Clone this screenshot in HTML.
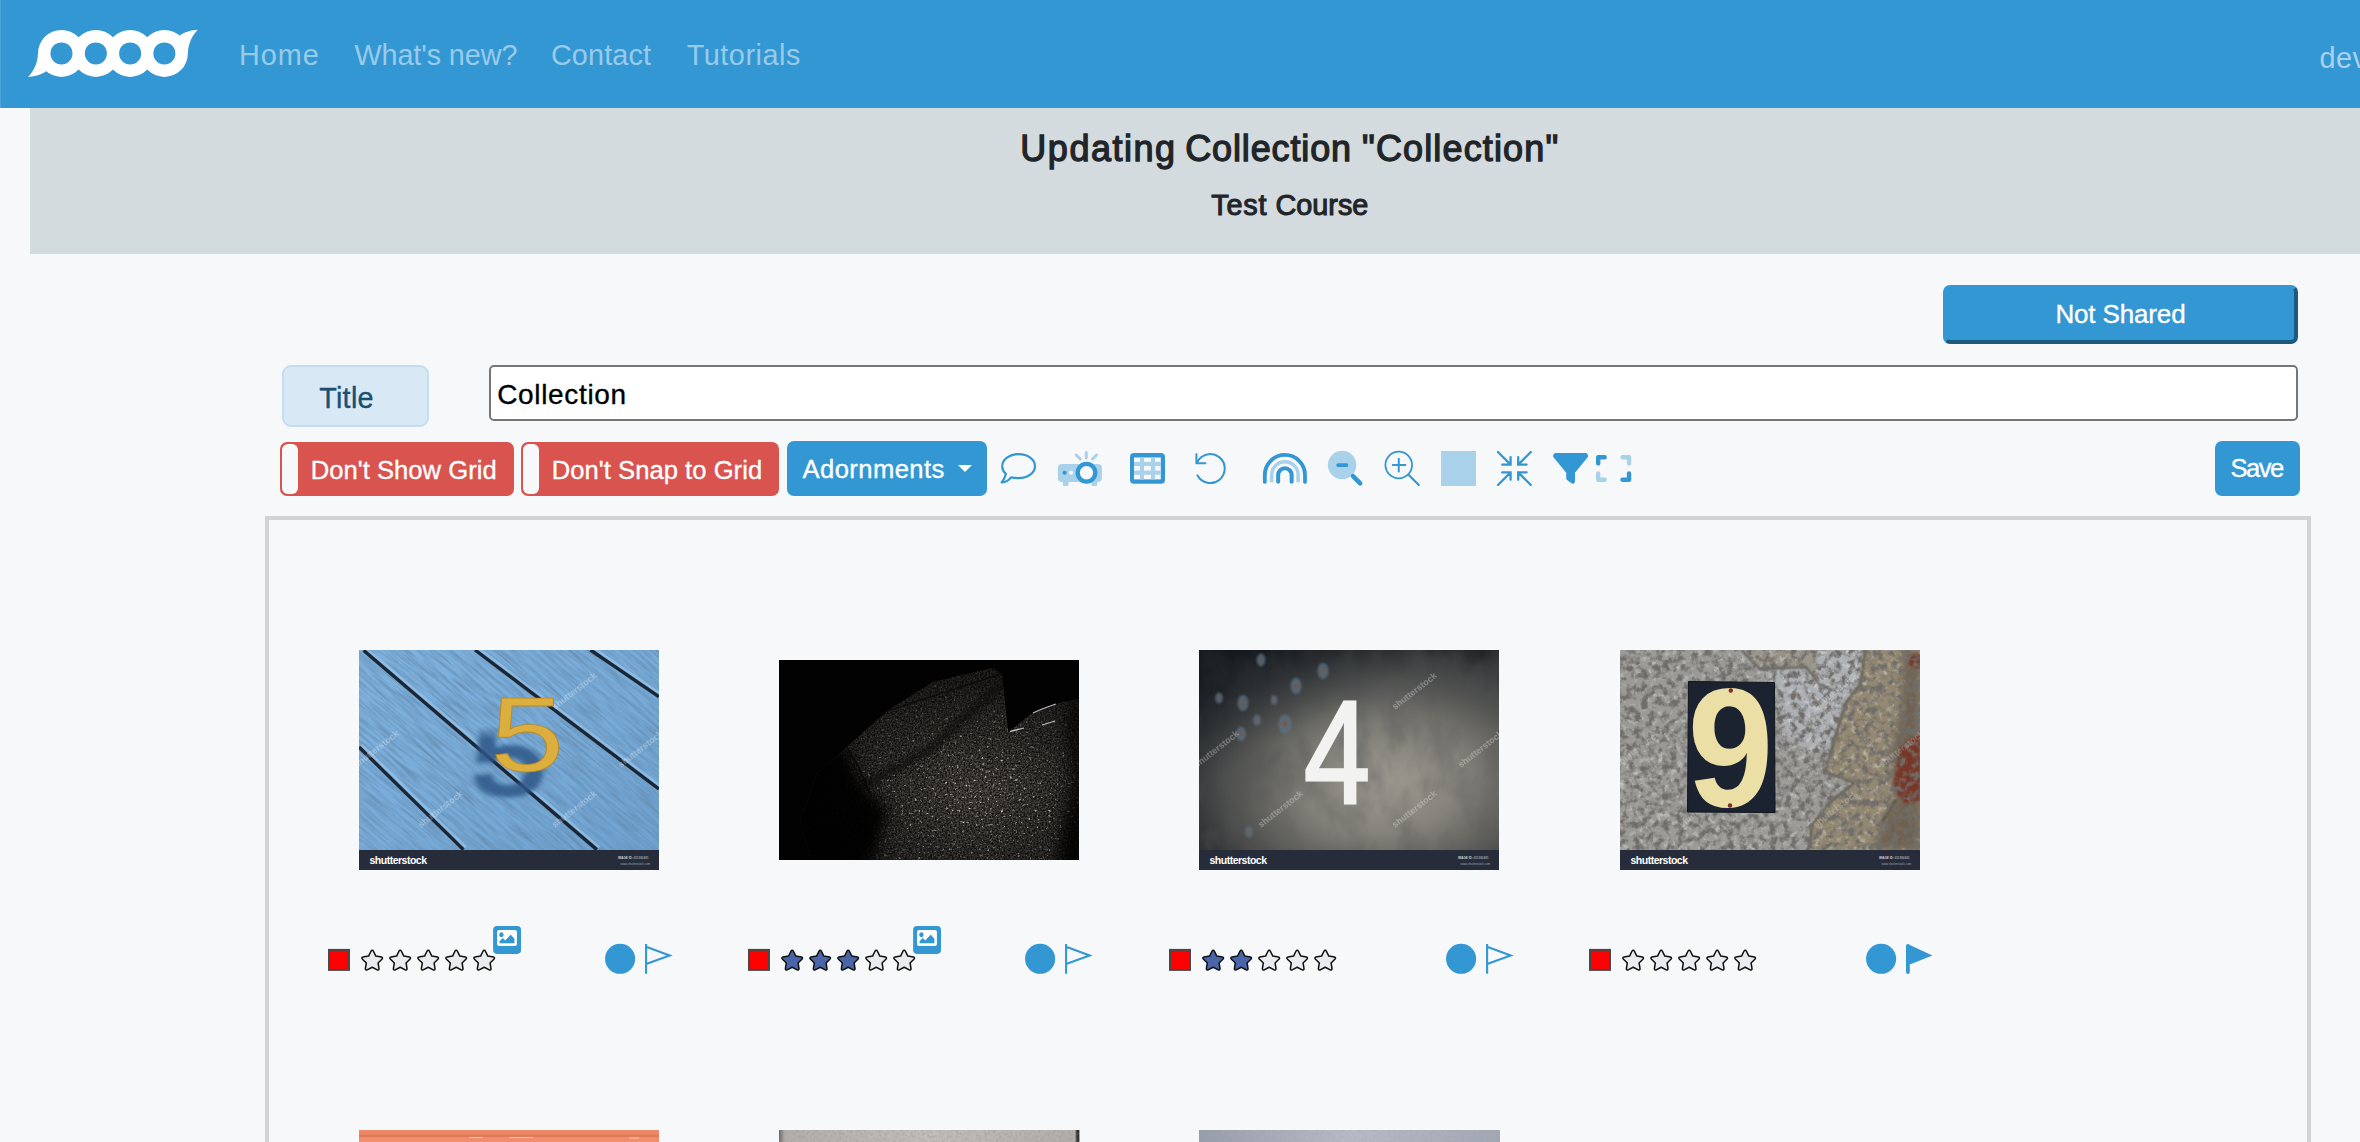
<!DOCTYPE html>
<html lang="en">
<head>
<meta charset="utf-8">
<title>Updating Collection "Collection"</title>
<style>
*{box-sizing:border-box;margin:0;padding:0}
html,body{width:2360px;height:1142px;overflow:hidden;background:#f7f8fa;font-family:"Liberation Sans",sans-serif;color:#212529}
.abs{position:absolute}
#nav{left:0;top:0;width:2360px;height:108px;background:#3397d3}
.navl{top:35px;height:40px;line-height:40px;font-size:28.8px;color:#99cbe9;white-space:nowrap}
#banner{left:30px;top:108px;width:2330px;height:146px;background:#d4dbde}
#h1{left:0;top:121.5px;width:2360px;font-size:36px;font-weight:normal;-webkit-text-stroke:1.3px #212529;paint-order:stroke fill;line-height:54px;color:#212529;white-space:nowrap}
#h2{left:0;top:184.3px;width:2360px;font-size:28.8px;font-weight:normal;-webkit-text-stroke:1.05px #212529;paint-order:stroke fill;line-height:42px;color:#212529;white-space:nowrap}
.t{white-space:nowrap;line-height:30px;height:30px;-webkit-text-stroke:.35px currentColor}
#notshared{left:1943px;top:285px;width:355px;height:59px;background:#3397d3;border:4px solid;border-color:#3397d3 #1d5a80 #1d5a80 #3397d3;border-radius:7px}
#titlelab{left:282px;top:365px;width:147px;height:62px;background:#d8e9f5;border:2px solid #c4def0;border-radius:9px}
#titlein{left:489px;top:365px;width:1809px;height:56px;background:#fff;border:2px solid #767676;border-radius:5px}
.red{background:#d9534f;border-radius:7px;top:442px;height:54px}
.red i{position:absolute;left:2px;top:2px;width:16px;height:50px;background:#f7f8fa;border-radius:6px}
#adorn{left:787px;top:441px;width:200px;height:55px;background:#3397d3;border-radius:7px}
#adorn b{position:absolute;left:170.5px;top:23.5px;width:0;height:0;border-left:7px solid transparent;border-right:7px solid transparent;border-top:7px solid #fff}
#save{left:2215px;top:441px;width:85px;height:55px;background:#3397d3;border-radius:7px}
#canvas{left:265px;top:516px;width:2046px;height:700px;border:4px solid #d3d3d3;border-bottom:none}
svg{position:absolute;overflow:visible}
#h1 span,#h2 span{position:absolute;top:0}
</style>
</head>
<body>
<div id="nav" class="abs"></div>
<svg class="abs" style="left:0;top:0" width="220" height="108" viewBox="0 0 220 108"><g fill="#fff"><circle cx="61.47" cy="53.4" r="23.5"/><circle cx="95.84" cy="53.4" r="23.5"/><circle cx="130.14" cy="53.4" r="23.5"/><circle cx="164.36" cy="53.4" r="23.5"/><path d="M37.9 53.4C37.9 62 34 71 28.05 77C33 76.8 40.5 75.5 46.6 71.1Z"/><path d="M187.93 53.4C187.93 44.8 191.83 35.8 197.78 29.8C192.83 30.0 185.33 31.3 179.23 35.7Z"/></g><g fill="#3397d3"><circle cx="61.47" cy="53.4" r="11"/><circle cx="95.84" cy="53.4" r="11"/><circle cx="130.14" cy="53.4" r="11"/><circle cx="164.36" cy="53.4" r="11"/></g></svg>
<div id="n0" class="abs navl" style="left:239.00px;letter-spacing:1.02px;">Home</div>
<div id="n1" class="abs navl" style="left:354.40px;letter-spacing:-0.09px;">What's new?</div>
<div id="n2" class="abs navl" style="left:550.90px;letter-spacing:0.14px;">Contact</div>
<div id="n3" class="abs navl" style="left:686.65px;letter-spacing:0.56px;">Tutorials</div>
<div id="n4" class="abs navl" style="left:2319.600px;top:38.300px;letter-spacing:.5px;color:#a9d2ee">dev</div>
<div id="banner" class="abs"></div>
<div id="h1" class="abs"><span id="w1" style="left:1020.32px;letter-spacing:1.53px">Updating</span> <span id="w2" style="left:1185.13px;letter-spacing:0.88px">Collection</span> <span id="w3" style="left:1362.00px;letter-spacing:1.14px">"Collection"</span></div>
<div id="h2" class="abs"><span id="w4" style="left:1211.35px;letter-spacing:0.79px">Test</span> <span id="w5" style="left:1275.53px;letter-spacing:0.00px">Course</span></div>
<div id="notshared" class="abs"></div>
<div id="titlelab" class="abs"></div>
<div id="titlein" class="abs"></div>
<div class="abs red" style="left:280px;width:234px"><i></i></div>
<div class="abs red" style="left:521px;width:258px"><i></i></div>
<div id="adorn" class="abs"><b></b></div>
<div id="save" class="abs"></div>
<span id="t_ns" class="abs t" style="left:2055.44px;letter-spacing:-0.15px;top:299.40px;font-size:26px;color:#fff">Not Shared</span>
<span id="t_title" class="abs t" style="left:319.14px;letter-spacing:0.28px;top:382.50px;font-size:28.800px;color:#1b4f72">Title</span>
<span id="t_coll" class="abs t" style="left:497.19px;letter-spacing:0.67px;top:379.60px;font-size:28px;color:#000">Collection</span>
<span id="t_dsg" class="abs t" style="left:310.72px;letter-spacing:0.03px;top:454.80px;font-size:25.600px;color:#fff">Don't Show Grid</span>
<span id="t_dstg" class="abs t" style="left:551.72px;letter-spacing:0.04px;top:454.80px;font-size:25.600px;color:#fff">Don't Snap to Grid</span>
<span id="t_ad" class="abs t" style="left:802.60px;letter-spacing:0.41px;top:453.70px;font-size:25.600px;color:#fff">Adornments</span>
<span id="t_save" class="abs t" style="left:2230.60px;letter-spacing:-1.60px;top:452.800px;font-size:25.600px;color:#fff">Save</span>
<div id="canvas" class="abs"></div>
<div class="abs" style="left:0;top:0;width:1px;height:1142px;background:rgba(255,255,255,.14)"></div>
<svg class="abs" style="left:990px;top:440px" width="660" height="60" viewBox="990 440 660 60"><path d="M1018.6 454.200C1009.500 454.200 1002.200 459.600 1002.200 466.200C1002.200 469.100 1003.600 471.800 1005.900 473.900C1005.300 476.700 1003.700 479.700 1001.700 482.400C1005.200 482.500 1008.600 480.600 1011 477.400C1013.400 478 1016 478.200 1018.600 478.200C1027.700 478.200 1035 472.800 1035 466.200S1027.700 454.200 1018.600 454.200Z" fill="none" stroke="#3397d3" stroke-width="2.200" stroke-linejoin="round"/><g fill="#a9d1ea"><rect x="1057.9" y="464" width="44" height="18" rx="4"/><rect x="1062.9" y="480" width="5.600" height="6" rx="1.5"/><rect x="1091.5" y="480" width="5.700" height="6" rx="1.5"/></g><g stroke="#a9d1ea" stroke-width="3" stroke-linecap="round"><path d="M1086.3 452.500V458M1076.2 455l4 4M1096.500 455l-4 4"/></g><circle cx="1086.5" cy="472.75" r="8.8" fill="#f7f8fa" stroke="#3397d3" stroke-width="4.2"/><circle cx="1064.6" cy="472.75" r="2.1" fill="#3397d3"/><circle cx="1071" cy="472.75" r="2.1" fill="#f7f8fa"/><rect x="1130" y="453.1" width="35" height="30.65" rx="4" fill="#3397d3"/><rect x="1134" y="457.5" width="26.800" height="21.900" fill="#f7f8fa"/><g fill="#a9d1ea"><rect x="1140" y="457.5" width="4" height="21.900"/><rect x="1151" y="457.5" width="4" height="21.900"/><rect x="1134" y="461.9" width="26.800" height="4.100"/><rect x="1134" y="470.6" width="26.800" height="4.150"/></g><g fill="none" stroke="#3397d3" stroke-width="2" stroke-linecap="round" stroke-linejoin="round"><path d="M1197.2 462.2A14.500 14.500 0 1 1 1197.4 475.3"/><path d="M1196.4 454.2V463.3H1205.4"/></g><g fill="none" stroke-linecap="round"><path d="M1264.8 481.900V475a20.100 20.100 0 0 1 40.200 0V481.900" stroke="#3397d3" stroke-width="3.800"/><path d="M1271.65 482.200V475a13.250 13.250 0 0 1 26.500 0V482.200" stroke="#a9d1ea" stroke-width="3.500" stroke-linecap="butt"/><path d="M1278.15 481.800V475a6.750 6.750 0 0 1 13.500 0V481.800" stroke="#3397d3" stroke-width="4"/></g><circle cx="1342.1" cy="465" r="14.25" fill="#a9d1ea"/><g stroke="#3397d3" stroke-linecap="round"><path d="M1338.1 465H1346.500" stroke-width="3.750"/><path d="M1353 476.100L1360.200 483.300" stroke-width="4.600"/></g><g fill="none" stroke="#3397d3" stroke-linecap="round"><circle cx="1398.75" cy="465" r="13.3" stroke-width="1.800"/><path d="M1392.8 465H1405.400M1398.750 458.800V471.400" stroke-width="2"/><path d="M1408.5 474.700L1418.800 485" stroke-width="2.200"/></g><rect x="1441" y="451" width="35" height="35" fill="#a9d1ea"/><path d="M1498.0 452.0L1510.6 464.6M1510.6 457.2L1510.6 464.6L1502.2 464.6M1498.0 485.0L1510.6 472.4M1510.6 479.8L1510.6 472.4L1502.2 472.4M1530.8 452.0L1518.2 464.6M1518.2 457.2L1518.2 464.6L1526.6 464.6M1530.8 485.0L1518.2 472.4M1518.2 479.8L1518.2 472.4L1526.6 472.4" fill="none" stroke="#3397d3" stroke-width="2.300" stroke-linecap="round" stroke-linejoin="miter"/><path transform="translate(1553.1 450.9) scale(.06836)" fill="#3397d3" d="M3.900 54.900C10.500 40.900 24.500 32 40 32H472c15.500 0 29.500 8.900 36.100 22.900s4.600 30.500-5.200 42.500L320 320.900V448c0 12.100-6.800 23.200-17.700 28.600s-23.800 4.300-33.500-3l-64-48c-8.100-6-12.800-15.500-12.800-25.600V320.900L9 97.300C-.7 85.400-2.800 68.800 3.900 54.900z"/><g fill="none" stroke-width="4.400" stroke-linecap="round" stroke-linejoin="round"><path d="M1598.2 463.400V457.200H1604.700M1629.050 473.450V479.700H1622.500" stroke="#3397d3"/><path d="M1622.5 457.200H1629.050V463.400M1598.200 473.450V479.700H1604.700" stroke="#a9d1ea"/></g></svg>
<!--ITEMS_START--><svg class="abs" style="left:359.200px;top:650px" width="300" height="220" viewBox="0 0 300 220"><defs><linearGradient id="g1" x1="0" y1="0" x2="1" y2="1"><stop offset="0" stop-color="#7fb2dd"/><stop offset=".5" stop-color="#79acd9"/><stop offset="1" stop-color="#6ea2d0"/></linearGradient><filter id="f1" x="0" y="0" width="100%" height="100%"><feTurbulence type="fractalNoise" baseFrequency=".03 .35" numOctaves="3" seed="7"/><feColorMatrix type="matrix" values="0 0 0 0 .12  0 0 0 0 .25  0 0 0 0 .42  2.200 0 0 0 -.8"/></filter><filter id="f1c" x="0" y="0" width="100%" height="100%"><feTurbulence type="fractalNoise" baseFrequency=".018 .55" numOctaves="2" seed="23"/><feColorMatrix type="matrix" values="0 0 0 0 .13  0 0 0 0 .25  0 0 0 0 .4  5 0 0 0 -3.050"/></filter><linearGradient id="gm1" gradientUnits="userSpaceOnUse" x1="0" y1="76" x2="0" y2="90"><stop offset="0" stop-color="#000"/><stop offset="1" stop-color="#fff"/></linearGradient><mask id="cs1" maskUnits="userSpaceOnUse" x="0" y="0" width="300" height="200"><rect width="300" height="200" fill="url(#gm1)"/></mask><filter id="b1"><feGaussianBlur stdDeviation="2.200"/></filter><clipPath id="c1"><rect width="300" height="200"/></clipPath></defs><g clip-path="url(#c1)"><rect width="300" height="200" fill="url(#g1)"/><g transform="rotate(40 150 100)"><rect x="-150" y="-200" width="600" height="600" filter="url(#f1)" opacity=".7"/><rect x="-150" y="-200" width="600" height="600" filter="url(#f1c)" opacity=".8"/></g><path d="M4.6 0.4L237.8 199.6" stroke="#9cc6ea" stroke-width="2.500" transform="translate(2.600 -2.200)" opacity=".7"/><path d="M4.6 0.4L237.8 199.6" stroke="#1a2634" stroke-width="3.400"/><path d="M116 0L299.8 139" stroke="#9cc6ea" stroke-width="2.500" transform="translate(2.600 -2.200)" opacity=".7"/><path d="M116 0L299.8 139" stroke="#1a2634" stroke-width="3.400"/><path d="M231.5 0L299.8 46.6" stroke="#9cc6ea" stroke-width="2.500" transform="translate(2.600 -2.200)" opacity=".7"/><path d="M231.5 0L299.8 46.6" stroke="#1a2634" stroke-width="3.400"/><path d="M0 97L104.4 199.6" stroke="#9cc6ea" stroke-width="2.500" transform="translate(2.600 -2.200)" opacity=".7"/><path d="M0 97L104.4 199.6" stroke="#1a2634" stroke-width="3.400"/><g font-family="Liberation Sans,sans-serif" font-weight="bold" font-size="9" fill="#fff" opacity="0.3"><text transform="translate(-2 118) rotate(-38)">shutterstock</text><text transform="translate(62 178) rotate(-38)">shutterstock</text><text transform="translate(196 60) rotate(-38)">shutterstock</text><text transform="translate(196 178) rotate(-38)">shutterstock</text><text transform="translate(262 118) rotate(-38)">shutterstock</text></g><g font-family="Liberation Sans,sans-serif" font-size="106"><g mask="url(#cs1)"><text transform="translate(113 144) scale(1.250 1)" fill="#2f5988" stroke="#2f5988" stroke-width="5" filter="url(#b1)" opacity=".85">5</text></g><text transform="translate(131.500 121) scale(1.250 1)" fill="#dcae3e" stroke="#b98a26" stroke-width=".8">5</text></g></g><rect x="0" y="200" width="300" height="20" fill="#262c3a"/><text x="10.500" y="214.300" font-family="Liberation Sans,sans-serif" font-weight="bold" font-size="10.500" fill="#fff" letter-spacing="-.5">shutterstock</text><text x="259" y="208.700" font-family="Liberation Sans,sans-serif" font-size="3" fill="#cfd3da"><tspan font-weight="bold">IMAGE ID:</tspan> 451384465</text><text x="261.500" y="214.500" font-family="Liberation Sans,sans-serif" font-size="3" fill="#9aa0ab">www.shutterstock.com</text></svg><svg class="abs" style="left:779.400px;top:660px" width="300" height="200" viewBox="0 0 300 200"><defs><radialGradient id="g2" cx=".66" cy=".66" r=".6"><stop offset="0" stop-color="#57524c"/><stop offset=".45" stop-color="#3d3a36"/><stop offset="1" stop-color="#22201e"/></radialGradient><radialGradient id="m2" cx=".68" cy=".7" r=".55"><stop offset="0" stop-color="#fff"/><stop offset=".55" stop-color="#8a8a8a"/><stop offset="1" stop-color="#2a2a2a"/></radialGradient><mask id="k2"><rect width="300" height="200" fill="url(#m2)"/></mask><filter id="f2" x="0" y="0" width="100%" height="100%"><feTurbulence type="fractalNoise" baseFrequency=".36" numOctaves="2" seed="11"/><feColorMatrix type="matrix" values="0 0 0 0 .95  0 0 0 0 .93  0 0 0 0 .9  4.200 0 0 0 -2.700"/><feGaussianBlur stdDeviation=".35"/></filter><filter id="f2b" x="0" y="0" width="100%" height="100%"><feTurbulence type="fractalNoise" baseFrequency=".6" numOctaves="2" seed="4"/><feColorMatrix type="matrix" values="0 0 0 0 0  0 0 0 0 0  0 0 0 0 0  1.800 0 0 0 -.55"/></filter><clipPath id="c2"><path d="M32 200L21 161L38 114L68 87L108 51L154 22L213 8L223 14L229 72L252 54L280 43L300 39V200Z"/></clipPath><filter id="b2"><feGaussianBlur stdDeviation="7"/></filter><filter id="b2s"><feGaussianBlur stdDeviation="1.500"/></filter></defs><rect width="300" height="200" fill="#020202"/><g clip-path="url(#c2)"><rect width="300" height="200" fill="url(#g2)"/><rect width="300" height="200" filter="url(#f2b)"/><g mask="url(#k2)"><rect width="300" height="200" filter="url(#f2)"/></g><path d="M84 126L150 90L226 22" stroke="#090807" stroke-width="9" fill="none" opacity=".55" filter="url(#b2s)"/><path d="M68 88L80 108L90 132M108 51L160 34L222 14" stroke="#0a0908" stroke-width="1.600" fill="none" opacity=".8"/><path d="M0 210L0 100L66 86L84 126L110 150L92 210Z" fill="#020202" opacity=".93" filter="url(#b2)"/><path d="M300 30L288 58L293 120L276 210H310Z" fill="#020202" opacity=".85" filter="url(#b2)"/></g><path d="M231 71.500C236 70 240 69.500 245 68M254 53C262 49 268 47 277 44M263 65L276 61" stroke="#d8d8d8" stroke-width="1.300" opacity=".85" fill="none"/></svg><svg class="abs" style="left:1199.400px;top:650px" width="300" height="220" viewBox="0 0 300 220"><defs><radialGradient id="g3" cx=".6" cy=".64" r=".78"><stop offset="0" stop-color="#a09d93"/><stop offset=".35" stop-color="#85837b"/><stop offset=".7" stop-color="#4d4e4d"/><stop offset="1" stop-color="#15181b"/></radialGradient><filter id="f3" x="0" y="0" width="100%" height="100%"><feTurbulence type="fractalNoise" baseFrequency=".035 .02" numOctaves="4" seed="5"/><feColorMatrix type="matrix" values="0 0 0 0 .1  0 0 0 0 .1  0 0 0 0 .1  2 0 0 0 -.8"/></filter><clipPath id="c3"><rect width="300" height="200"/></clipPath><linearGradient id="v3" x1="0" y1="0" x2=".6" y2=".75"><stop offset="0" stop-color="#10171d" stop-opacity=".75"/><stop offset=".55" stop-color="#10171d" stop-opacity=".12"/><stop offset="1" stop-color="#10171d" stop-opacity="0"/></linearGradient><filter id="b3"><feGaussianBlur stdDeviation="1.200"/></filter></defs><g clip-path="url(#c3)"><rect width="300" height="200" fill="url(#g3)"/><rect width="300" height="200" filter="url(#f3)" opacity=".5"/><rect width="300" height="200" fill="url(#v3)"/><g filter="url(#b3)"><ellipse cx="62" cy="10" rx="4.4" ry="6.4" fill="#5d7186" opacity=".75"/><circle cx="62" cy="10" r="1.6" fill="#8a4f22" opacity=".9"/><ellipse cx="124" cy="21" rx="5.5" ry="8.0" fill="#5d7186" opacity=".75"/><circle cx="124" cy="21" r="2.0" fill="#8a4f22" opacity=".9"/><ellipse cx="97" cy="36" rx="5.5" ry="8.0" fill="#5d7186" opacity=".75"/><circle cx="97" cy="36" r="2.0" fill="#8a4f22" opacity=".9"/><ellipse cx="20" cy="48" rx="3.8500000000000005" ry="5.6000000000000005" fill="#5d7186" opacity=".75"/><circle cx="20" cy="48" r="1.4000000000000001" fill="#8a4f22" opacity=".9"/><ellipse cx="44" cy="53" rx="5.5" ry="8.0" fill="#5d7186" opacity=".75"/><circle cx="44" cy="53" r="2.0" fill="#8a4f22" opacity=".9"/><ellipse cx="75" cy="50" rx="3.3000000000000003" ry="4.800000000000001" fill="#5d7186" opacity=".75"/><circle cx="75" cy="50" r="1.2000000000000002" fill="#8a4f22" opacity=".9"/><ellipse cx="58" cy="70" rx="3.8500000000000005" ry="5.6000000000000005" fill="#5d7186" opacity=".75"/><circle cx="58" cy="70" r="1.4000000000000001" fill="#8a4f22" opacity=".9"/><ellipse cx="86" cy="74" rx="6.6000000000000005" ry="9.600000000000001" fill="#5d7186" opacity=".75"/><circle cx="86" cy="74" r="2.4000000000000004" fill="#8a4f22" opacity=".9"/><ellipse cx="42" cy="84" rx="4.95" ry="7.2" fill="#5d7186" opacity=".75"/><circle cx="42" cy="84" r="1.8" fill="#8a4f22" opacity=".9"/><ellipse cx="50" cy="182" rx="3.8500000000000005" ry="5.6000000000000005" fill="#5d7186" opacity=".75"/><circle cx="50" cy="182" r="1.4000000000000001" fill="#8a4f22" opacity=".9"/></g><g font-family="Liberation Sans,sans-serif" font-weight="bold" font-size="9" fill="#fff" opacity="0.3"><text transform="translate(-2 118) rotate(-38)">shutterstock</text><text transform="translate(62 178) rotate(-38)">shutterstock</text><text transform="translate(196 60) rotate(-38)">shutterstock</text><text transform="translate(196 178) rotate(-38)">shutterstock</text><text transform="translate(262 118) rotate(-38)">shutterstock</text></g><text transform="translate(105 152.800) scale(.81 1)" font-family="Liberation Sans,sans-serif" font-size="146.500" fill="#f2f2f0" stroke="#f2f2f0" stroke-width="3.200">4</text></g><rect x="0" y="200" width="300" height="20" fill="#262c3a"/><text x="10.500" y="214.300" font-family="Liberation Sans,sans-serif" font-weight="bold" font-size="10.500" fill="#fff" letter-spacing="-.5">shutterstock</text><text x="259" y="208.700" font-family="Liberation Sans,sans-serif" font-size="3" fill="#cfd3da"><tspan font-weight="bold">IMAGE ID:</tspan> 451384465</text><text x="261.500" y="214.500" font-family="Liberation Sans,sans-serif" font-size="3" fill="#9aa0ab">www.shutterstock.com</text></svg><svg class="abs" style="left:1619.900px;top:650px" width="300" height="220" viewBox="0 0 300 220"><defs><filter id="f4" x="0" y="0" width="100%" height="100%"><feTurbulence type="fractalNoise" baseFrequency=".14" numOctaves="4" seed="9"/><feColorMatrix type="matrix" values="0 0 0 0 .16  0 0 0 0 .15  0 0 0 0 .14  3.400 0 0 0 -1.450"/></filter><filter id="f4w" x="0" y="0" width="100%" height="100%"><feTurbulence type="fractalNoise" baseFrequency=".16" numOctaves="4" seed="21"/><feColorMatrix type="matrix" values="0 0 0 0 .86  0 0 0 0 .87  0 0 0 0 .88  3 0 0 0 -1.550"/></filter><clipPath id="c4"><rect width="300" height="200"/></clipPath><filter id="b4"><feGaussianBlur stdDeviation="4"/></filter><filter id="b4s"><feGaussianBlur stdDeviation="1.200"/></filter></defs><g clip-path="url(#c4)"><rect width="300" height="200" fill="#9a9a97"/><path d="M120 0H245L243 17L240 35L226 52L219 73L212 97L190 100L165 88L158 50L148 26Z" fill="#adb0b4" filter="url(#b4)"/><path d="M122 0H196L199 34L186 17L140 19L127 6Z" fill="#9c978b" filter="url(#b4s)"/><path d="M245 0H300V200H189L192 175L210 152L234 133L205 122L210 105L219 73L226 52L240 35L243 17Z" fill="#938871" filter="url(#b4s)"/><rect width="300" height="200" filter="url(#f4w)" opacity=".45"/><path d="M284 0H300V200H254L262 172L276 150L270 104L281 60Z" fill="#5e5142" opacity=".7" filter="url(#b4)"/><path d="M281 96L300 84V151L285 153L272 139ZM288 6L300 4V19L290 16Z" fill="#7a3021" filter="url(#b4s)" opacity=".9"/><path d="M122 0L127 6L140 19L186 17L199 34L212 40M245 0L243 17L240 35L226 52L219 73L210 105L205 122L234 133L210 152L192 175L189 200M262 172L276 150" stroke="#3d3932" stroke-width="1.800" fill="none" opacity=".8" filter="url(#b4s)"/><rect width="300" height="200" filter="url(#f4)"/><g font-family="Liberation Sans,sans-serif" font-weight="bold" font-size="9" fill="#fff" opacity="0.2"><text transform="translate(-2 118) rotate(-38)">shutterstock</text><text transform="translate(62 178) rotate(-38)">shutterstock</text><text transform="translate(196 60) rotate(-38)">shutterstock</text><text transform="translate(196 178) rotate(-38)">shutterstock</text><text transform="translate(262 118) rotate(-38)">shutterstock</text></g><path d="M68.500 31.500L154.500 32.500L155 162.500L67.500 162Z" fill="#1b2330" stroke="#10151c" stroke-width="1"/><text transform="translate(67.600 155.800) scale(.92 1)" font-family="Liberation Sans,sans-serif" font-weight="bold" font-size="168" fill="#ebdfa6">9</text><circle cx="110.800" cy="40.500" r="2.200" fill="#7a2f22"/><circle cx="110" cy="155.500" r="2.200" fill="#7a2f22"/></g><rect x="0" y="200" width="300" height="20" fill="#262c3a"/><text x="10.500" y="214.300" font-family="Liberation Sans,sans-serif" font-weight="bold" font-size="10.500" fill="#fff" letter-spacing="-.5">shutterstock</text><text x="259" y="208.700" font-family="Liberation Sans,sans-serif" font-size="3" fill="#cfd3da"><tspan font-weight="bold">IMAGE ID:</tspan> 451384465</text><text x="261.500" y="214.500" font-family="Liberation Sans,sans-serif" font-size="3" fill="#9aa0ab">www.shutterstock.com</text></svg><svg class="abs" style="left:320.00px;top:920px" width="360" height="60" viewBox="320 920 360 60"><rect x="329" y="949.900" width="20" height="20" fill="#f00" stroke="#484848" stroke-width="2"/><path transform="translate(361.11 950.300) scale(.0385)" d="M259.3 17.8L194 150.2 47.9 171.5c-26.2 3.8-36.7 36.1-17.7 54.600l105.700 103-25 145.500c-4.500 26.300 23.200 46 46.400 33.700L288 439.600l130.700 68.700c23.200 12.200 50.900-7.400 46.400-33.700l-25-145.500 105.700-103c19-18.500 8.500-50.800-17.700-54.600L382 150.200 316.700 17.800c-11.700-23.600-45.600-23.900-57.400 0z" fill="#e9ebf0" stroke="#111" stroke-width="40" stroke-linejoin="round"/><path transform="translate(389.11 950.300) scale(.0385)" d="M259.3 17.8L194 150.2 47.9 171.5c-26.2 3.8-36.7 36.1-17.7 54.600l105.700 103-25 145.500c-4.500 26.300 23.200 46 46.400 33.700L288 439.600l130.700 68.700c23.200 12.200 50.900-7.400 46.400-33.700l-25-145.500 105.700-103c19-18.500 8.500-50.800-17.700-54.600L382 150.200 316.700 17.800c-11.700-23.600-45.600-23.900-57.400 0z" fill="#e9ebf0" stroke="#111" stroke-width="40" stroke-linejoin="round"/><path transform="translate(417.11 950.300) scale(.0385)" d="M259.3 17.8L194 150.2 47.9 171.5c-26.2 3.8-36.7 36.1-17.7 54.600l105.700 103-25 145.500c-4.500 26.300 23.200 46 46.400 33.700L288 439.600l130.700 68.700c23.200 12.200 50.900-7.400 46.400-33.700l-25-145.500 105.700-103c19-18.500 8.500-50.800-17.700-54.600L382 150.200 316.700 17.800c-11.700-23.600-45.600-23.900-57.400 0z" fill="#e9ebf0" stroke="#111" stroke-width="40" stroke-linejoin="round"/><path transform="translate(445.11 950.300) scale(.0385)" d="M259.3 17.8L194 150.2 47.9 171.5c-26.2 3.8-36.7 36.1-17.7 54.600l105.700 103-25 145.500c-4.500 26.300 23.200 46 46.400 33.700L288 439.600l130.700 68.700c23.200 12.200 50.900-7.400 46.400-33.700l-25-145.500 105.700-103c19-18.500 8.500-50.800-17.700-54.600L382 150.200 316.700 17.800c-11.700-23.600-45.600-23.900-57.400 0z" fill="#e9ebf0" stroke="#111" stroke-width="40" stroke-linejoin="round"/><path transform="translate(473.11 950.300) scale(.0385)" d="M259.3 17.8L194 150.2 47.9 171.5c-26.2 3.8-36.7 36.1-17.7 54.600l105.700 103-25 145.500c-4.500 26.300 23.200 46 46.400 33.700L288 439.600l130.700 68.700c23.200 12.200 50.900-7.400 46.400-33.700l-25-145.500 105.700-103c19-18.500 8.500-50.800-17.700-54.600L382 150.200 316.700 17.800c-11.700-23.600-45.600-23.900-57.400 0z" fill="#e9ebf0" stroke="#111" stroke-width="40" stroke-linejoin="round"/><rect x="493.100" y="926" width="27.900" height="27.900" rx="3.800" fill="#3397d3"/><path transform="translate(497.100 927.340) scale(.0387 .0415)" d="M464 448H48c-26.510 0-48-21.490-48-48V112c0-26.510 21.490-48 48-48h416c26.510 0 48 21.490 48 48v288c0 26.510-21.490 48-48 48zM112 120c-30.928 0-56 25.072-56 56s25.072 56 56 56 56-25.072 56-56-25.072-56-56-56zM64 384h384V272l-87.515-87.515c-4.686-4.686-12.284-4.686-16.971 0L208 320l-55.515-55.515c-4.686-4.686-12.284-4.686-16.971 0L64 336v48z" fill="#fff"/><circle cx="620.100" cy="958.800" r="15.050" fill="#3397d3"/><path d="M646.100 944.100V973.700M646.100 946.700L669.700 955.500L646.100 964" fill="none" stroke="#3397d3" stroke-width="2.100"/></svg><svg class="abs" style="left:740.27px;top:920px" width="360" height="60" viewBox="320 920 360 60"><rect x="329" y="949.900" width="20" height="20" fill="#f00" stroke="#484848" stroke-width="2"/><path transform="translate(361.11 950.300) scale(.0385)" d="M259.3 17.8L194 150.2 47.9 171.5c-26.2 3.8-36.7 36.1-17.7 54.600l105.700 103-25 145.500c-4.500 26.300 23.200 46 46.400 33.700L288 439.600l130.700 68.700c23.200 12.200 50.900-7.400 46.400-33.700l-25-145.500 105.700-103c19-18.500 8.500-50.800-17.700-54.600L382 150.200 316.700 17.800c-11.700-23.600-45.600-23.900-57.400 0z" fill="#4a66a8" stroke="#111" stroke-width="40" stroke-linejoin="round"/><path transform="translate(389.11 950.300) scale(.0385)" d="M259.3 17.8L194 150.2 47.9 171.5c-26.2 3.8-36.7 36.1-17.7 54.600l105.700 103-25 145.500c-4.500 26.300 23.200 46 46.400 33.700L288 439.600l130.700 68.700c23.200 12.200 50.900-7.400 46.400-33.700l-25-145.500 105.700-103c19-18.500 8.500-50.800-17.700-54.600L382 150.200 316.700 17.800c-11.700-23.600-45.600-23.900-57.400 0z" fill="#4a66a8" stroke="#111" stroke-width="40" stroke-linejoin="round"/><path transform="translate(417.11 950.300) scale(.0385)" d="M259.3 17.8L194 150.2 47.9 171.5c-26.2 3.8-36.7 36.1-17.7 54.600l105.700 103-25 145.500c-4.500 26.300 23.200 46 46.400 33.700L288 439.600l130.700 68.700c23.200 12.200 50.900-7.400 46.400-33.700l-25-145.500 105.700-103c19-18.500 8.500-50.800-17.700-54.600L382 150.200 316.700 17.800c-11.700-23.600-45.600-23.900-57.400 0z" fill="#4a66a8" stroke="#111" stroke-width="40" stroke-linejoin="round"/><path transform="translate(445.11 950.300) scale(.0385)" d="M259.3 17.8L194 150.2 47.9 171.5c-26.2 3.8-36.7 36.1-17.7 54.600l105.700 103-25 145.500c-4.500 26.300 23.200 46 46.400 33.700L288 439.600l130.700 68.700c23.200 12.200 50.900-7.400 46.400-33.700l-25-145.500 105.700-103c19-18.500 8.500-50.800-17.700-54.600L382 150.200 316.700 17.800c-11.700-23.600-45.600-23.900-57.400 0z" fill="#e9ebf0" stroke="#111" stroke-width="40" stroke-linejoin="round"/><path transform="translate(473.11 950.300) scale(.0385)" d="M259.3 17.8L194 150.2 47.9 171.5c-26.2 3.8-36.7 36.1-17.7 54.600l105.700 103-25 145.500c-4.500 26.300 23.200 46 46.400 33.700L288 439.600l130.700 68.700c23.200 12.200 50.900-7.400 46.400-33.700l-25-145.500 105.700-103c19-18.500 8.500-50.800-17.700-54.600L382 150.200 316.700 17.800c-11.700-23.600-45.600-23.900-57.400 0z" fill="#e9ebf0" stroke="#111" stroke-width="40" stroke-linejoin="round"/><rect x="493.100" y="926" width="27.900" height="27.900" rx="3.800" fill="#3397d3"/><path transform="translate(497.100 927.340) scale(.0387 .0415)" d="M464 448H48c-26.510 0-48-21.490-48-48V112c0-26.510 21.490-48 48-48h416c26.510 0 48 21.490 48 48v288c0 26.510-21.490 48-48 48zM112 120c-30.928 0-56 25.072-56 56s25.072 56 56 56 56-25.072 56-56-25.072-56-56-56zM64 384h384V272l-87.515-87.515c-4.686-4.686-12.284-4.686-16.971 0L208 320l-55.515-55.515c-4.686-4.686-12.284-4.686-16.971 0L64 336v48z" fill="#fff"/><circle cx="620.100" cy="958.800" r="15.050" fill="#3397d3"/><path d="M646.100 944.100V973.700M646.100 946.700L669.700 955.500L646.100 964" fill="none" stroke="#3397d3" stroke-width="2.100"/></svg><svg class="abs" style="left:1160.54px;top:920px" width="360" height="60" viewBox="320 920 360 60"><rect x="329" y="949.900" width="20" height="20" fill="#f00" stroke="#484848" stroke-width="2"/><path transform="translate(361.11 950.300) scale(.0385)" d="M259.3 17.8L194 150.2 47.9 171.5c-26.2 3.8-36.7 36.1-17.7 54.600l105.700 103-25 145.500c-4.500 26.300 23.200 46 46.400 33.700L288 439.600l130.700 68.700c23.200 12.200 50.900-7.400 46.400-33.700l-25-145.500 105.700-103c19-18.500 8.500-50.800-17.700-54.600L382 150.200 316.700 17.800c-11.700-23.600-45.600-23.900-57.400 0z" fill="#4a66a8" stroke="#111" stroke-width="40" stroke-linejoin="round"/><path transform="translate(389.11 950.300) scale(.0385)" d="M259.3 17.8L194 150.2 47.9 171.5c-26.2 3.8-36.7 36.1-17.7 54.600l105.700 103-25 145.500c-4.500 26.300 23.200 46 46.400 33.700L288 439.600l130.700 68.700c23.200 12.200 50.900-7.400 46.400-33.700l-25-145.500 105.700-103c19-18.500 8.500-50.800-17.700-54.600L382 150.200 316.700 17.800c-11.700-23.600-45.600-23.900-57.400 0z" fill="#4a66a8" stroke="#111" stroke-width="40" stroke-linejoin="round"/><path transform="translate(417.11 950.300) scale(.0385)" d="M259.3 17.8L194 150.2 47.9 171.5c-26.2 3.8-36.7 36.1-17.7 54.600l105.700 103-25 145.500c-4.500 26.300 23.200 46 46.400 33.700L288 439.600l130.700 68.700c23.200 12.200 50.900-7.400 46.400-33.700l-25-145.500 105.700-103c19-18.500 8.500-50.800-17.700-54.600L382 150.200 316.700 17.800c-11.700-23.600-45.600-23.900-57.400 0z" fill="#e9ebf0" stroke="#111" stroke-width="40" stroke-linejoin="round"/><path transform="translate(445.11 950.300) scale(.0385)" d="M259.3 17.8L194 150.2 47.9 171.5c-26.2 3.8-36.7 36.1-17.7 54.600l105.700 103-25 145.500c-4.500 26.300 23.200 46 46.400 33.700L288 439.600l130.700 68.700c23.200 12.200 50.900-7.400 46.400-33.700l-25-145.500 105.700-103c19-18.500 8.500-50.800-17.700-54.600L382 150.200 316.700 17.800c-11.700-23.600-45.600-23.900-57.400 0z" fill="#e9ebf0" stroke="#111" stroke-width="40" stroke-linejoin="round"/><path transform="translate(473.11 950.300) scale(.0385)" d="M259.3 17.8L194 150.2 47.9 171.5c-26.2 3.8-36.7 36.1-17.7 54.600l105.700 103-25 145.500c-4.500 26.300 23.200 46 46.400 33.700L288 439.600l130.700 68.700c23.200 12.200 50.900-7.400 46.400-33.700l-25-145.500 105.700-103c19-18.500 8.500-50.800-17.700-54.600L382 150.200 316.700 17.800c-11.700-23.600-45.600-23.900-57.400 0z" fill="#e9ebf0" stroke="#111" stroke-width="40" stroke-linejoin="round"/><circle cx="620.100" cy="958.800" r="15.050" fill="#3397d3"/><path d="M646.100 944.100V973.700M646.100 946.700L669.700 955.500L646.100 964" fill="none" stroke="#3397d3" stroke-width="2.100"/></svg><svg class="abs" style="left:1580.81px;top:920px" width="360" height="60" viewBox="320 920 360 60"><rect x="329" y="949.900" width="20" height="20" fill="#f00" stroke="#484848" stroke-width="2"/><path transform="translate(361.11 950.300) scale(.0385)" d="M259.3 17.8L194 150.2 47.9 171.5c-26.2 3.8-36.7 36.1-17.7 54.600l105.700 103-25 145.500c-4.500 26.300 23.200 46 46.400 33.700L288 439.600l130.700 68.700c23.200 12.200 50.900-7.400 46.400-33.700l-25-145.500 105.700-103c19-18.500 8.500-50.800-17.700-54.600L382 150.200 316.700 17.800c-11.700-23.600-45.600-23.900-57.400 0z" fill="#e9ebf0" stroke="#111" stroke-width="40" stroke-linejoin="round"/><path transform="translate(389.11 950.300) scale(.0385)" d="M259.3 17.8L194 150.2 47.9 171.5c-26.2 3.8-36.7 36.1-17.7 54.600l105.700 103-25 145.500c-4.500 26.300 23.200 46 46.400 33.700L288 439.600l130.700 68.700c23.200 12.200 50.900-7.400 46.400-33.700l-25-145.500 105.700-103c19-18.500 8.500-50.800-17.700-54.600L382 150.200 316.700 17.800c-11.700-23.600-45.600-23.900-57.400 0z" fill="#e9ebf0" stroke="#111" stroke-width="40" stroke-linejoin="round"/><path transform="translate(417.11 950.300) scale(.0385)" d="M259.3 17.8L194 150.2 47.9 171.5c-26.2 3.8-36.7 36.1-17.7 54.600l105.700 103-25 145.500c-4.500 26.300 23.200 46 46.400 33.700L288 439.600l130.700 68.700c23.200 12.200 50.900-7.400 46.400-33.700l-25-145.500 105.700-103c19-18.500 8.500-50.800-17.700-54.600L382 150.200 316.700 17.800c-11.700-23.600-45.600-23.900-57.400 0z" fill="#e9ebf0" stroke="#111" stroke-width="40" stroke-linejoin="round"/><path transform="translate(445.11 950.300) scale(.0385)" d="M259.3 17.8L194 150.2 47.9 171.5c-26.2 3.8-36.7 36.1-17.7 54.600l105.700 103-25 145.500c-4.500 26.300 23.200 46 46.400 33.700L288 439.600l130.700 68.700c23.200 12.200 50.900-7.400 46.400-33.700l-25-145.500 105.700-103c19-18.500 8.500-50.800-17.700-54.600L382 150.200 316.700 17.800c-11.700-23.600-45.600-23.900-57.400 0z" fill="#e9ebf0" stroke="#111" stroke-width="40" stroke-linejoin="round"/><path transform="translate(473.11 950.300) scale(.0385)" d="M259.3 17.8L194 150.2 47.9 171.5c-26.2 3.8-36.7 36.1-17.7 54.600l105.700 103-25 145.500c-4.500 26.300 23.200 46 46.400 33.700L288 439.600l130.700 68.700c23.200 12.200 50.900-7.400 46.400-33.700l-25-145.500 105.700-103c19-18.500 8.500-50.800-17.700-54.600L382 150.200 316.700 17.800c-11.700-23.600-45.600-23.900-57.400 0z" fill="#e9ebf0" stroke="#111" stroke-width="40" stroke-linejoin="round"/><circle cx="620.100" cy="958.800" r="15.050" fill="#3397d3"/><path d="M646.900 944.100c-1.050 0-1.900.85-1.900 1.900v26.100a1.900 1.900 0 0 0 3.800 0v-7.600l22.600-9-22.600-10.500c-.3-.55-1-.9-1.900-.9z" fill="#3397d3"/></svg><svg class="abs" style="left:359px;top:1130px" width="1142" height="12" viewBox="0 0 1142 12"><defs><filter id="fs" x="0" y="0" width="100%" height="100%"><feTurbulence type="fractalNoise" baseFrequency=".35" numOctaves="2" seed="3"/><feColorMatrix type="matrix" values="0 0 0 0 .3  0 0 0 0 .3  0 0 0 0 .3  1.600 0 0 0 -.6"/></filter><linearGradient id="gs1" x1="0" y1="0" x2="0" y2="1"><stop offset="0" stop-color="#ee8b6c"/><stop offset=".38" stop-color="#ea8464"/><stop offset=".5" stop-color="#d9704f"/><stop offset=".62" stop-color="#f08c6c"/><stop offset="1" stop-color="#f0906f"/></linearGradient><linearGradient id="gs2" x1="0" y1="0" x2="1" y2="0"><stop offset="0" stop-color="#6a6865"/><stop offset=".02" stop-color="#b3afab"/><stop offset=".5" stop-color="#c2beba"/><stop offset=".985" stop-color="#b2aeab"/><stop offset=".992" stop-color="#2c2c2c"/></linearGradient><linearGradient id="gs3" x1="0" y1="0" x2="1" y2="0"><stop offset="0" stop-color="#989eab"/><stop offset=".5" stop-color="#b7bbc6"/><stop offset="1" stop-color="#a2a8b4"/></linearGradient></defs><rect x="0" y="0" width="300" height="12" fill="url(#gs1)"/><path d="M110 7.500h14M150 7.500h24M270 8h10" stroke="#f7d9a8" stroke-width="1.200" opacity=".8"/><rect x="420" y="0" width="300.400" height="12" fill="url(#gs2)"/><rect x="420" y="0" width="300" height="12" filter="url(#fs)" opacity=".6"/><rect x="840" y="0" width="301" height="12" fill="url(#gs3)"/><rect x="840" y="0" width="301" height="12" filter="url(#fs)" opacity=".25"/></svg><!--ITEMS_END-->
</body>
</html>
